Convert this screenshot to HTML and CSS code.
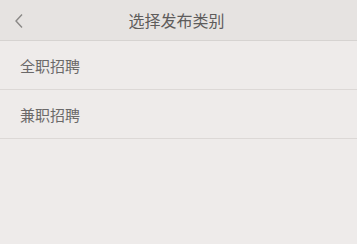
FILE: index.html
```html
<!DOCTYPE html>
<html lang="zh">
<head>
<meta charset="utf-8">
<link rel="stylesheet" href="styles.css">
</head>
<body>
<div class="page">
  <header class="bar">
    <span class="back">
      <svg width="10" height="16" viewBox="0 0 10 16"><path d="M8 1.5 L2 8 L8 14.5" fill="none" stroke="#8a8886" stroke-width="1.4"/></svg>
    </span>
    <h1 class="title">选择发布类别</h1>
  </header>
  <ul class="list">
    <li class="item">全职招聘</li>
    <li class="item">兼职招聘</li>
  </ul>
</div>
</body>
</html>
```

FILE: styles.css
```css
html, body {
  margin: 0;
  padding: 0;
  background: #eeebea;
}
.page {
  width: 357px;
  height: 244px;
  background: #eeebea;
  font-family: "Noto Sans CJK SC", "Noto Sans", sans-serif;
}
.bar {
  height: 40px;
  background: #e6e3e1;
  border-bottom: 1px solid #d6d3d1;
  display: flex;
  align-items: center;
  justify-content: center;
  position: relative;
}
.back {
  position: absolute;
  left: 14px;
  top: 13px;
  display: flex;
}
.title {
  margin: 0 0 0 -4px;
  font-size: 16px;
  font-weight: 400;
  color: #5e5c5b;
  line-height: 1;
}
.list {
  list-style: none;
  margin: 0;
  padding: 0;
}
.item {
  height: 48px;
  display: flex;
  align-items: center;
  padding-left: 20px;
  font-size: 15px;
  color: #6b6969;
  border-bottom: 1px solid #dcd8d6;
}
```
